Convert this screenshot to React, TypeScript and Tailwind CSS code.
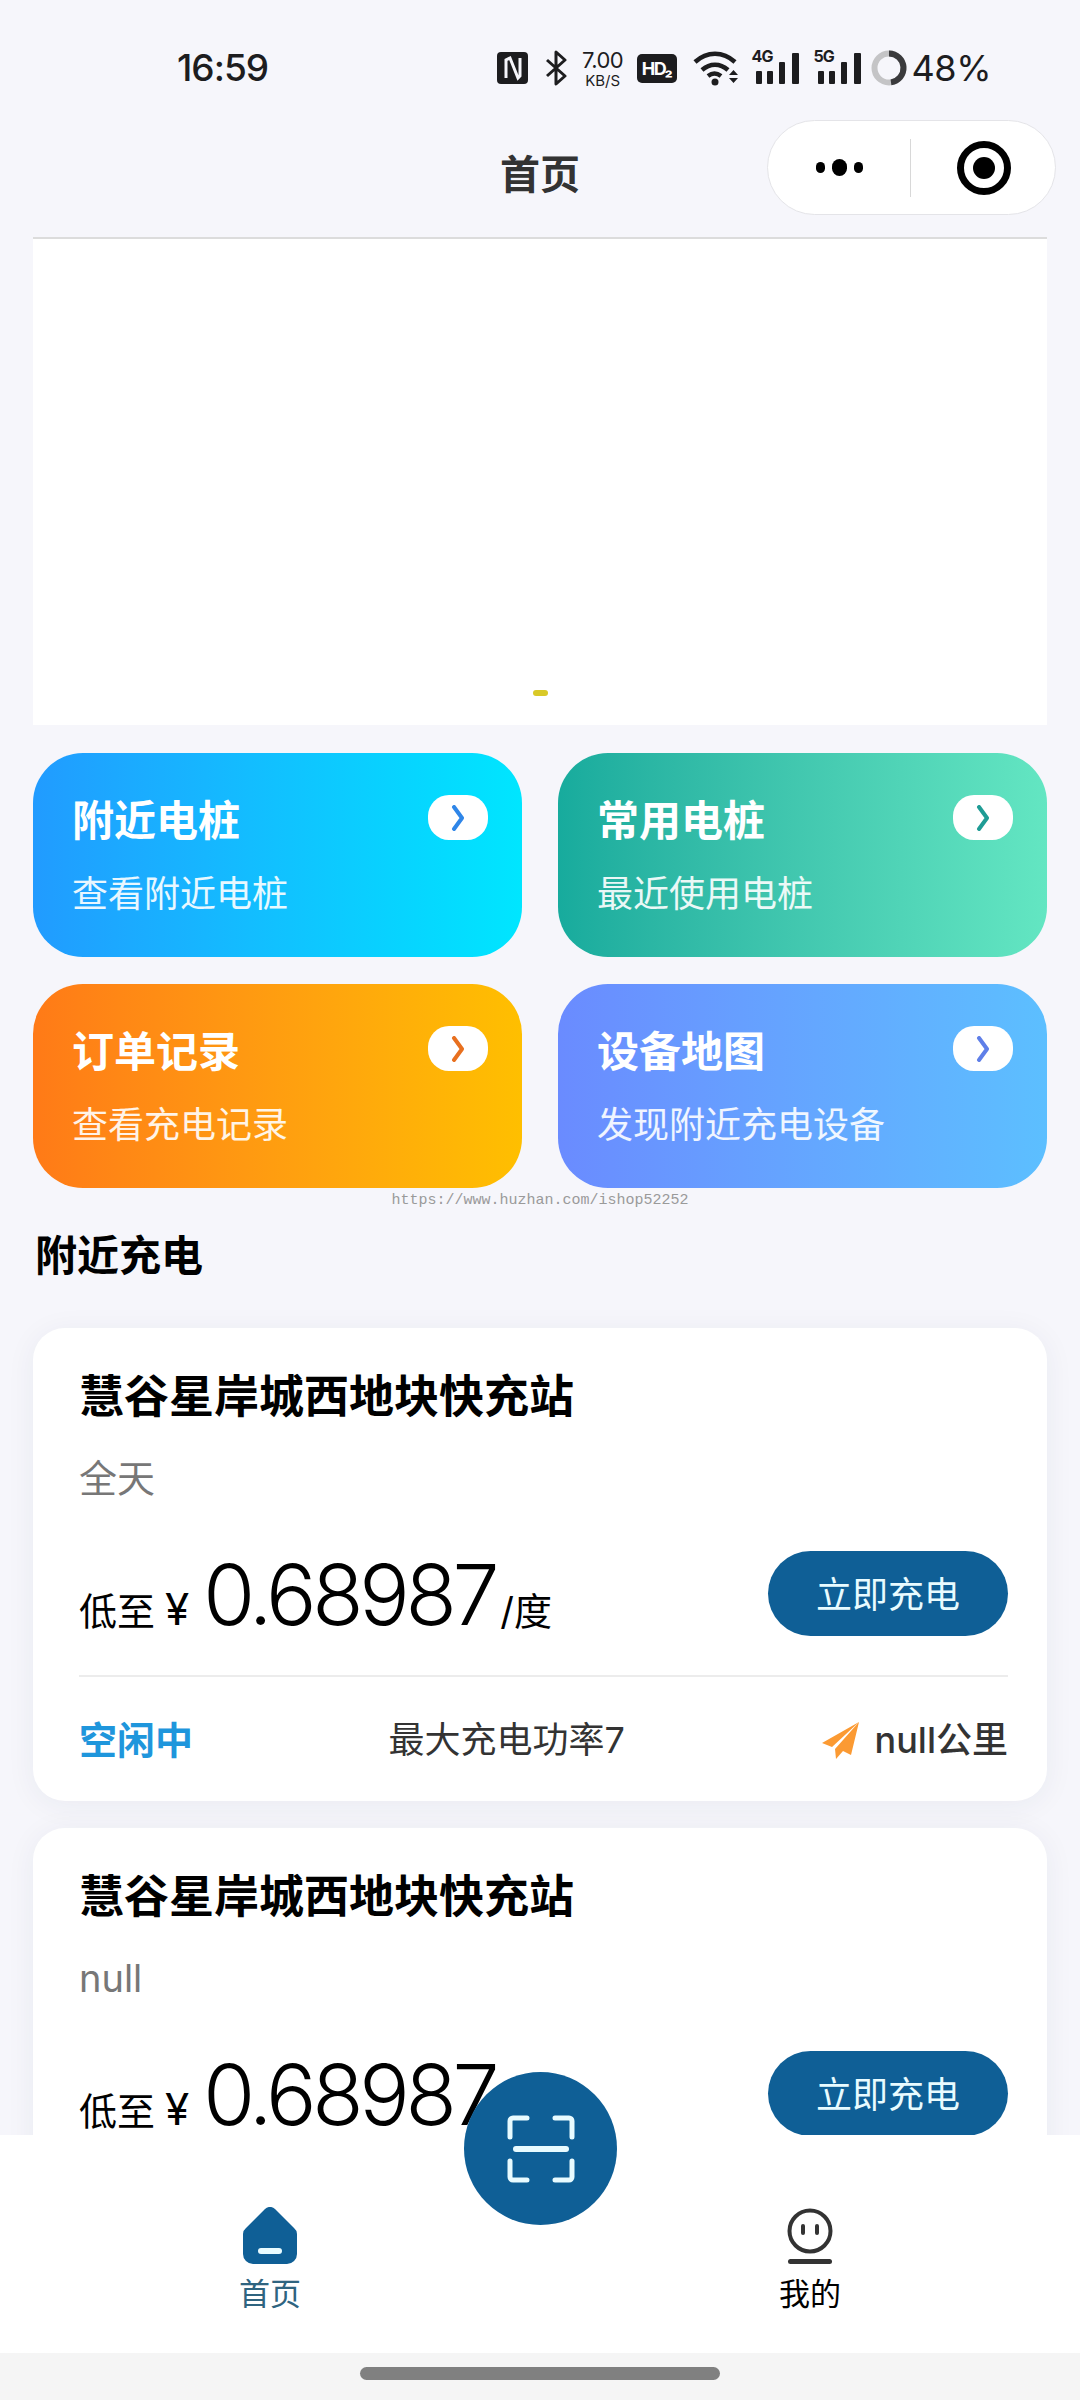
import React from 'react';

const FONT = "font-['Inter','Noto_Sans_CJK_SC',sans-serif]";

const Chevron: React.FC<{ color: string }> = ({ color }) => (
  <div className="mt-[3px] flex h-[45px] w-[60px] items-center justify-center rounded-[21px] bg-white">
    <svg width="14" height="26" viewBox="0 0 14 26" fill="none">
      <path d="M3 2l8 11L3 24" stroke={color} strokeWidth="4" strokeLinecap="round" strokeLinejoin="round" />
    </svg>
  </div>
);

const entries = [
  { title: '附近电桩', sub: '查看附近电桩', color: '#2f86e8', bg: 'bg-gradient-to-r from-[#219bff] to-[#00e6ff]' },
  { title: '常用电桩', sub: '最近使用电桩', color: '#1f9c95', bg: 'bg-gradient-to-r from-[#17ab9d] to-[#63e6c2]' },
  { title: '订单记录', sub: '查看充电记录', color: '#e8701f', bg: 'bg-gradient-to-r from-[#ff7a17] to-[#ffbf00]' },
  { title: '设备地图', sub: '发现附近充电设备', color: '#5f7fe8', bg: 'bg-gradient-to-r from-[#6a8bff] to-[#5cbfff]' },
];

const Signal: React.FC<{ label: string }> = ({ label }) => (
  <div className="relative h-[32px] w-[47px]">
    <span className="absolute left-0 top-[-5px] text-[16px] font-bold leading-[18px] tracking-[-1px] text-[#1d1d1f]">{label}</span>
    <div className="absolute bottom-0 left-[4px] h-[13px] w-[6px] rounded-[1px] bg-[#1d1d1f]" />
    <div className="absolute bottom-0 left-[15px] h-[13px] w-[6px] rounded-[1px] bg-[#1d1d1f]" />
    <div className="absolute bottom-0 left-[27px] h-[22px] w-[6px] rounded-[1px] bg-[#1d1d1f]" />
    <div className="absolute bottom-0 left-[40px] h-[31px] w-[7px] rounded-[1px] bg-[#1d1d1f]" />
  </div>
);

const StatusBar: React.FC = () => (
  <div className="flex h-[114px] items-center pl-[177px] pr-[89px] pt-[22px] text-[#1d1d1f]">
    <span className="text-[37px] font-medium tracking-[-1px]">16:59</span>
    <div className="ml-auto flex items-center">
      {/* nfc */}
      <svg width="31" height="32" viewBox="0 0 31 32" className="mr-[17px]">
        <rect width="31" height="32" rx="4" fill="#1d1d1f" />
        <path d="M9 26V8l4-2 8 20 2-2V6" stroke="#f6f6fb" strokeWidth="3" fill="none" />
      </svg>
      {/* bluetooth */}
      <svg width="22" height="36" viewBox="0 0 22 36" fill="none" className="mr-[12px]">
        <path d="M2 10l18 16-9 8V2l9 8L2 26" stroke="#1d1d1f" strokeWidth="3" strokeLinejoin="round" />
      </svg>
      <div className="mr-[10px] flex w-[48px] flex-col items-center">
        <span className="text-[22px] font-normal leading-[24px] tracking-[-0.5px]">7.00</span>
        <span className="text-[15px] font-normal leading-[17px]">KB/S</span>
      </div>
      <div className="mr-[16px] flex h-[29px] w-[40px] items-center justify-center rounded-[5px] bg-[#1d1d1f] text-[18px] font-bold tracking-[-1.5px] text-white">
        HD₂
      </div>
      {/* wifi */}
      <svg width="46" height="36" viewBox="0 0 46 36" fill="none" className="mr-[13px]">
        <path d="M2 12c12-11 28-11 40 0M9 20c8-7 18-7 26 0M15 26c4-3 9-3 13 0" stroke="#1d1d1f" strokeWidth="4.500" />
        <circle cx="22" cy="32" r="3.500" fill="#1d1d1f" />
        <path d="M36 25l4.500-5 4.500 5zM36 28l4.500 5 4.500-5z" fill="#1d1d1f" />
      </svg>
      <Signal label="4G" />
      <div className="w-[15px]" />
      <Signal label="5G" />
      {/* battery ring */}
      <svg width="36" height="36" viewBox="0 0 36 36" fill="none" className="ml-[10px] mr-[5px]">
        <circle cx="18" cy="18" r="14.500" stroke="#c4c4c6" strokeWidth="6" />
        <path d="M18 3.500a14.500 14.500 0 0 1 2 28.860" stroke="#3a3a3c" strokeWidth="6" />
      </svg>
      <span className="text-[36px] leading-none tracking-[-0.5px]">48%</span>
    </div>
  </div>
);

const NavBar: React.FC = () => (
  <div className="relative flex h-[123px] items-center justify-center pb-[2px]">
    <span className="text-[40px] font-bold text-[#333333]">首页</span>
    <div className="absolute left-[767px] top-[6px] flex h-[95px] w-[289px] items-center rounded-[48px] border border-[#e4e4e8] bg-white">
      <div className="flex w-[142px] items-center justify-center gap-[7px]">
        <div className="h-[11px] w-[9px] rounded-full bg-black" />
        <div className="h-[17px] w-[15px] rounded-full bg-black" />
        <div className="h-[11px] w-[9px] rounded-full bg-black" />
      </div>
      <div className="h-[58px] w-px bg-[#d8d8d8]" />
      <div className="flex flex-1 items-center justify-center pl-[2px]">
        <div className="flex h-[54px] w-[54px] items-center justify-center rounded-full border-[7px] border-black">
          <div className="h-[22px] w-[22px] rounded-full bg-black" />
        </div>
      </div>
    </div>
  </div>
);

const EntryCard: React.FC<(typeof entries)[number]> = ({ title, sub, color, bg }) => (
  <div className={`flex h-[204px] justify-between rounded-[50px] pl-[39px] pr-[34px] pt-[39px] text-white ${bg}`}>
    <div>
      <div className="mt-[1px] text-[42px] font-bold leading-[56px]">{title}</div>
      <div className="mt-[21px] text-[36px] leading-[48px] text-white/90">{sub}</div>
    </div>
    <Chevron color={color} />
  </div>
);

const StationCard: React.FC<{ sub: string }> = ({ sub }) => (
  <div className="h-[473px] rounded-[32px] bg-white pl-[46px] pr-[39px] pt-[36px] shadow-[0_4px_30px_rgba(40,50,90,0.06)]">
    <div className="text-[45px] font-bold leading-[66px] text-black">慧谷星岸城西地块快充站</div>
    <div className="mt-[18px] text-[38px] leading-[60px] text-[#777777]">{sub}</div>
    <div className="mt-[35px] flex items-center justify-between">
      <div className="flex translate-y-[2px] items-baseline text-black">
        <span className="text-[38px]">低至</span>
        <span className="ml-[10px] text-[44px]">¥</span>
        <span className="ml-[14px] text-[84px] font-light leading-[100px] tracking-[-4.3px]">0.68987</span>
        <span className="ml-[5px] text-[38px]">/度</span>
      </div>
      <button className="flex h-[85px] w-[240px] items-center justify-center rounded-[43px] bg-[#0f5f96] pt-[3px] text-[36px] text-[#e8fbff]">
        立即充电
      </button>
    </div>
    <div className="mt-[32px] h-[2px] bg-[#ececec]" />
    <div className="mt-[35px] flex items-center justify-between">
      <span className="text-[38px] font-bold leading-[56px] text-[#1f96dc]">空闲中</span>
      <span className="ml-[-1px] text-[36px] text-[#333333]">最大充电功率7</span>
      <div className="flex items-center">
        <svg width="38" height="38" viewBox="0 0 38 38" className="mr-[15px]">
          <path d="M37 1L0 22l10 4L37 1zM37 1L13 28l1 10 7-8 8 4z" fill="#fb9a33" />
        </svg>
        <span className="text-[36px] font-medium text-[#333333]">null公里</span>
      </div>
    </div>
  </div>
);

const TabBar: React.FC = () => (
  <div className="absolute bottom-0 left-0 right-0">
    <div className="relative h-[218px] bg-white">
      <div className="absolute left-[464px] top-[-63px] flex h-[153px] w-[153px] items-center justify-center rounded-full bg-[#0f5f96]">
        <svg width="68" height="68" viewBox="0 0 68 68" fill="none" stroke="#e8fbff" strokeWidth="5" strokeLinecap="round" strokeLinejoin="round">
          <path d="M3 22V6a3 3 0 0 1 3-3h14M48 3h14a3 3 0 0 1 3 3v16M3 46v16a3 3 0 0 0 3 3h14M48 65h14a3 3 0 0 0 3-3V46" />
          <path d="M9 34h50" strokeWidth="6" />
        </svg>
      </div>
      <div className="absolute left-[230px] top-[72px] flex w-[80px] flex-col items-center">
        <svg width="56" height="58" viewBox="0 0 56 58">
          <path d="M23 2a7 7 0 0 1 10 0l19 19a8 8 0 0 1 3 6v20a10 10 0 0 1-10 10H11A10 10 0 0 1 1 47V27a8 8 0 0 1 3-6z" fill="#0f5f96" />
          <rect x="16" y="41" width="24" height="6" rx="3" fill="#e8fbff" />
        </svg>
        <span className="mt-[8px] text-[31px] leading-[42px] text-[#2f6480]">首页</span>
      </div>
      <div className="absolute left-[770px] top-[72px] flex w-[80px] flex-col items-center">
        <svg width="46" height="58" viewBox="0 0 46 58" fill="none">
          <circle cx="23" cy="24" r="20.500" stroke="#333333" strokeWidth="4" />
          <rect x="14" y="17" width="4" height="11" rx="2" fill="#333333" />
          <rect x="28" y="17" width="4" height="11" rx="2" fill="#333333" />
          <rect x="1" y="52" width="44" height="5" rx="2.500" fill="#333333" />
        </svg>
        <span className="mt-[8px] text-[31px] leading-[42px] text-black">我的</span>
      </div>
    </div>
    <div className="flex h-[47px] justify-center bg-[#f5f5f5] pt-[14px]">
      <div className="h-[13px] w-[360px] rounded-full bg-[#808080]" />
    </div>
  </div>
);

const App: React.FC = () => {
  return (
    <div className={`relative h-[2400px] w-[1080px] overflow-hidden bg-[#f6f6fb] ${FONT}`}>
      <StatusBar />
      <NavBar />
      <div className="mx-[33px]">
        <div className="flex h-[488px] items-end justify-center border-t-2 border-[#dcdcdc] bg-white pb-[29px]">
          <div className="h-[6px] w-[15px] rounded-full bg-[#d9c928]" />
        </div>
        <div className="mt-[28px] grid grid-cols-2 gap-x-[36px] gap-y-[27px]">
          {entries.map((e) => (
            <EntryCard key={e.title} {...e} />
          ))}
        </div>
        <div className="mt-[3px] text-center font-['Liberation_Mono',monospace] text-[15px] leading-[20px] text-[#9a9a9a]">
          https://www.huzhan.com/ishop52252
        </div>
        <div className="ml-[2px] mt-[14px] text-[42px] font-bold leading-[62px] text-black">附近充电</div>
        <div className="mt-[41px] flex flex-col gap-[27px]">
          <StationCard sub="全天" />
          <StationCard sub="null" />
        </div>
      </div>
      <TabBar />
    </div>
  );
};

export default App;
